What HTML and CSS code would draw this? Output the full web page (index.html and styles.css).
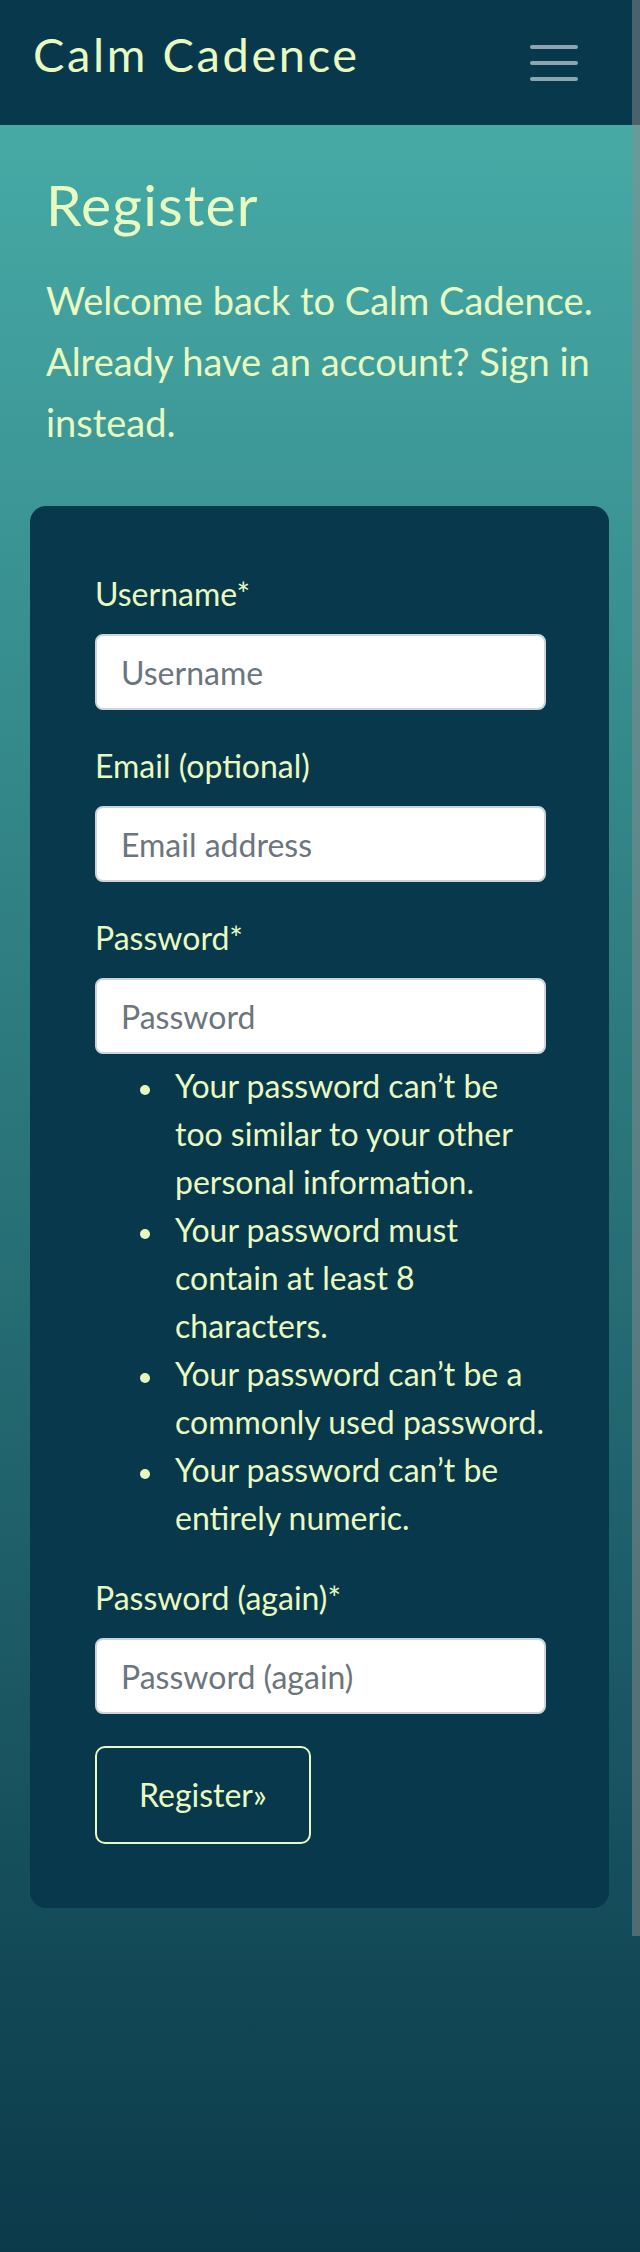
FILE: index.html
```html
<!DOCTYPE html>
<html lang="en">
<head>
<meta charset="utf-8">
<title>Register – Calm Cadence</title>
<link rel="stylesheet" href="styles.css">
</head>
<body>
<div class="page">
  <nav class="navbar">
    <a class="brand" href="#">Calm Cadence</a>
    <button class="toggler" type="button" aria-label="Toggle navigation">
      <svg width="60" height="60" viewBox="0 0 30 30" aria-hidden="true">
        <path d="M4 7h22M4 15h22M4 23h22" stroke="rgba(255,255,255,0.55)" stroke-width="2" stroke-linecap="round" fill="none"/>
      </svg>
    </button>
  </nav>
  <main class="main">
    <h1 class="title">Register</h1>
    <p class="lead">Welcome back to Calm Cadence. Already have an account? Sign in instead.</p>
    <form class="card">
      <div class="group">
        <label class="label" for="u">Username*</label>
        <input class="input" id="u" type="text" placeholder="Username">
      </div>
      <div class="group">
        <label class="label" for="e">Email (optional)</label>
        <input class="input" id="e" type="email" placeholder="Email address">
      </div>
      <div class="group">
        <label class="label" for="p1">Password*</label>
        <input class="input" id="p1" type="password" placeholder="Password">
        <ul class="help">
          <li><span>Your password can’t be too similar to your other personal information.</span></li>
          <li><span>Your password must contain at least 8 characters.</span></li>
          <li><span>Your password can’t be a commonly used password.</span></li>
          <li><span>Your password can’t be entirely numeric.</span></li>
        </ul>
      </div>
      <div class="group">
        <label class="label" for="p2">Password (again)*</label>
        <input class="input" id="p2" type="password" placeholder="Password (again)">
      </div>
      <button class="btn" type="submit">Register»</button>
    </form>
  </main>
  <div class="scroll-thumb"></div>
</div>
</body>
</html>
```
FILE: styles.css
```css
* { box-sizing: border-box; }
html, body { margin: 0; padding: 0; }
body {
  font-family: Lato, "Open Sans", sans-serif;
  color: #e8fac0;
  background: #0a394b;
}
.page {
  position: relative;
  min-height: 2252px;
  display: flex;
  flex-direction: column;
}
.navbar {
  height: 125px;
  background: #08384b;
  display: flex;
  align-items: center;
  justify-content: space-between;
  padding: 0 56px 0 33px;
}
.brand {
  font-family: Lato, sans-serif;
  font-size: 47px;
  line-height: 1;
  letter-spacing: 2.6px;
  color: #e8fac0;
  text-decoration: none;
  margin-top: -17px;
}
.toggler {
  border: 0;
  background: transparent;
  padding: 0;
  width: 60px;
  height: 60px;
  display: block;
}
.toggler svg { display: block; }
.main {
  flex: 1;
  background: linear-gradient(180deg, #46aaa5 0%, #0b3a4b 100%);
  padding: 45px 0 0 46px;
}
.title {
  font-size: 57px;
  line-height: 68px;
  font-weight: 400;
  letter-spacing: 1.2px;
  margin: 0 0 32px 0;
}
.lead {
  font-size: 38px;
  line-height: 61px;
  margin: 0 40px 53px 0;
}
.card {
  margin-left: -16px;
  width: 579px;
  background: #08384b;
  border-radius: 16px;
  padding: 64px 63px 64px 65px;
}
.group { margin-bottom: 32px; }
.label {
  display: block;
  font-size: 32px;
  line-height: 48px;
  margin-bottom: 16px;
}
.input {
  display: block;
  width: 100%;
  height: 76px;
  border: 2px solid #ced4da;
  border-radius: 8px;
  background: #fff;
  padding: 12px 24px;
  font-family: Lato, sans-serif;
  font-size: 32px;
  line-height: 48px;
  color: #212529;
}
.input::placeholder { color: #6c757d; }
.help {
  list-style: none;
  margin: 8px 0 0 0;
  padding-left: 80px;
  font-size: 32px;
  line-height: 48px;
}
.help li {
  display: flex;
  align-items: flex-start;
}
.help li::before {
  content: "";
  flex: none;
  width: 10px;
  height: 10px;
  border-radius: 50%;
  background: currentColor;
  margin: 23px 25px 0 -35px;
}
.btn {
  display: inline-block;
  font-family: Lato, sans-serif;
  font-size: 32px;
  line-height: 48px;
  color: #e8fac0;
  background: transparent;
  border: 2px solid #e8fac0;
  border-radius: 10px;
  padding: 23px 42px;
}
.scroll-thumb {
  position: absolute;
  top: 0;
  right: 0;
  width: 8px;
  height: 1936px;
  background: rgba(140, 140, 140, 0.5);
}
```
